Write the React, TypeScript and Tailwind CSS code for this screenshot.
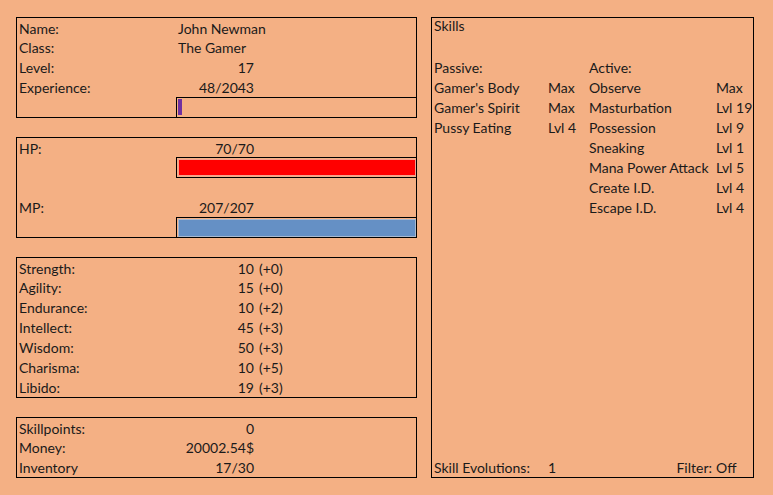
import React from "react";

// Character sheet laid out like a spreadsheet: 20px rows, thin black cell borders
const font = { fontFamily: "Lato, 'Liberation Sans', sans-serif" };

interface Row {
  label: string;
  value: string;
  extra?: string;
}

const stats: Row[] = [
  { label: "Strength:", value: "10", extra: "(+0)" },
  { label: "Agility:", value: "15", extra: "(+0)" },
  { label: "Endurance:", value: "10", extra: "(+2)" },
  { label: "Intellect:", value: "45", extra: "(+3)" },
  { label: "Wisdom:", value: "50", extra: "(+3)" },
  { label: "Charisma:", value: "10", extra: "(+5)" },
  { label: "Libido:", value: "19", extra: "(+3)" },
];

const misc: Row[] = [
  { label: "Skillpoints:", value: "0" },
  { label: "Money:", value: "20002.54$" },
  { label: "Inventory", value: "17/30" },
];

const passive = [
  ["Gamer's Body", "Max"],
  ["Gamer's Spirit", "Max"],
  ["Pussy Eating", "Lvl 4"],
];

const active = [
  ["Observe", "Max"],
  ["Masturbation", "Lvl 19"],
  ["Possession", "Lvl 9"],
  ["Sneaking", "Lvl 1"],
  ["Mana Power Attack", "Lvl 5"],
  ["Create I.D.", "Lvl 4"],
  ["Escape I.D.", "Lvl 4"],
];

function Line({ label, value, extra, h = "h-5" }: Row & { h?: string }) {
  return (
    <div className={`grid grid-cols-[159px_80px_160px] ${h} items-end leading-[22px] whitespace-nowrap`}>
      <span className="pl-[2px]">{label}</span>
      <span className="pr-[2px] text-right">{value}</span>
      <span className="pl-[3px]">{extra}</span>
    </div>
  );
}

// Text row whose value is left aligned and spills over the next cell
function TextLine({ label, value, h = "h-5" }: Row & { h?: string }) {
  return (
    <div className={`grid grid-cols-[159px_240px] ${h} items-end leading-[22px] whitespace-nowrap`}>
      <span className="pl-[2px]">{label}</span>
      <span className="pl-[2px]">{value}</span>
    </div>
  );
}

export default function App() {
  const skillRows = Math.max(passive.length, active.length);
  const skillGrid =
    "grid grid-cols-[114px_41px_127px_39px] h-5 items-end leading-[22px] whitespace-nowrap";

  return (
    <div
      className="flex w-[773px] h-[495px] bg-[#f4b084] pt-[17px] pl-[16px] gap-[14px] text-[14px] text-[#1a1a1a]"
      style={font}
    >
      {/* Left column: profile, bars, attributes, wallet */}
      <div className="flex flex-col gap-[19px] w-[401px]">
        <div className="border border-black flex flex-col">
          <TextLine label="Name:" value="John Newman" h="h-[19px]" />
          <TextLine label="Class:" value="The Gamer" />
          <Line label="Level:" value="17" />
          <Line label="Experience:" value="48/2043" />
          <div className="grid grid-cols-[159px_240px] h-5">
            <span />
            <div className="border-t border-l border-black pl-px pt-px pb-[2px]">
              <div className="w-[4px] h-full bg-[#7030a0]" />
            </div>
          </div>
        </div>

        <div className="border border-black flex flex-col">
          <Line label="HP:" value="70/70" h="h-[19px]" />
          <div className="grid grid-cols-[159px_240px] h-[21px]">
            <span />
            <div className="border-y border-l border-black pl-px py-px">
              <div className="h-full bg-[#ff0000] border border-[#f6a08c]" />
            </div>
          </div>
          <div className="h-[19px]" />
          <Line label="MP:" value="207/207" />
          <div className="grid grid-cols-[159px_240px] h-5">
            <span />
            <div className="border-t border-l border-black pl-px pt-px">
              <div className="h-full bg-[#6590c5] border border-[#a9b9cf]" />
            </div>
          </div>
        </div>

        <div className="border border-black flex flex-col">
          {stats.map((s, i) => (
            <Line key={s.label} {...s} h={i === 0 ? "h-[19px]" : "h-5"} />
          ))}
        </div>

        <div className="border border-black flex flex-col">
          {misc.map((s, i) => (
            <Line key={s.label} {...s} h={i === 0 ? "h-[19px]" : "h-5"} />
          ))}
        </div>
      </div>

      {/* Skills panel */}
      <div className="border border-black w-[323px] h-[461px] flex flex-col">
        <div className="h-[19px] flex items-end leading-[22px]">
          <span className="pl-[2px]">Skills</span>
        </div>
        <div className="h-5" />
        <div className={skillGrid}>
          <span className="pl-[2px]">Passive:</span>
          <span />
          <span className="pl-[2px]">Active:</span>
          <span />
        </div>
        {Array.from({ length: skillRows }).map((_, i) => (
          <div key={i} className={skillGrid}>
            <span className="pl-[2px]">{passive[i]?.[0]}</span>
            <span className="pl-[2px]">{passive[i]?.[1]}</span>
            <span className="pl-[2px]">{active[i]?.[0]}</span>
            <span className="pl-[2px]">{active[i]?.[1]}</span>
          </div>
        ))}
        <div className={`mt-auto ${skillGrid}`}>
          <span className="pl-[2px]">Skill Evolutions:</span>
          <span className="pl-[2px]">1</span>
          <span className="pr-[2px] text-right">Filter:</span>
          <span className="pl-[2px]">Off</span>
        </div>
      </div>
    </div>
  );
}
